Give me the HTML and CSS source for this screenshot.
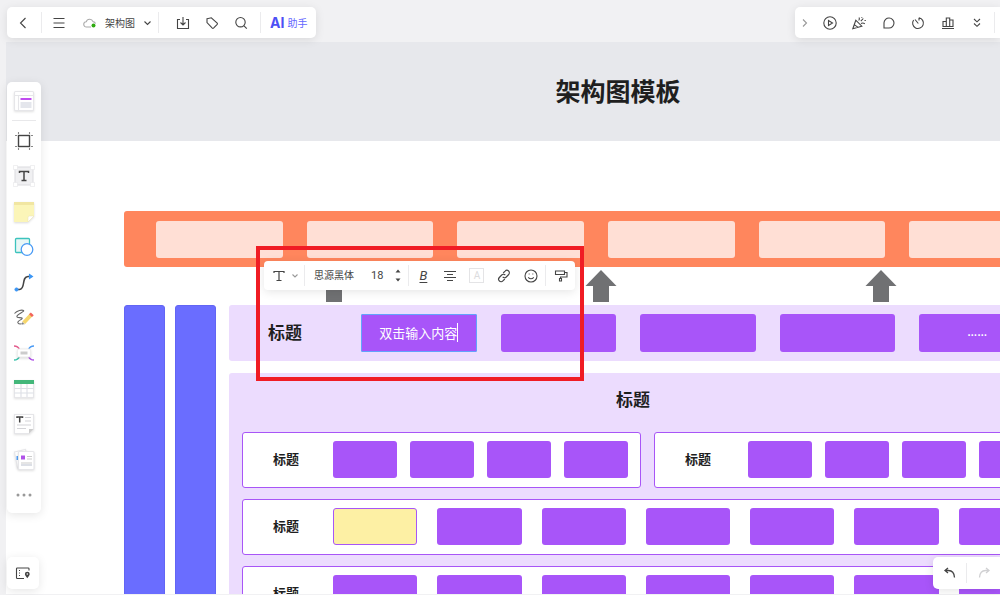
FILE: index.html
```html
<!DOCTYPE html>
<html lang="zh-CN">
<head>
    <meta charset="UTF-8">
    <title>架构图</title>
    <meta name="viewport" content="width=device-width, initial-scale=1.0">
    <link rel="stylesheet" href="styles.css">
</head>
<body>
    <main class="board">
        <div class="artboard">
            <header class="board-title">
                <h1>架构图模板</h1>
            </header>
            <div class="diagram">
                <div class="top-band">
                    <div class="peach"></div>
                    <div class="peach"></div>
                    <div class="peach"></div>
                    <div class="peach"></div>
                    <div class="peach"></div>
                    <div class="peach"></div>
                </div>
                <div class="arrows">
                    <svg width="32" height="32" viewBox="0 0 32 32"><path d="M16 0 31.500 16H24V32H8V16H.5Z"/></svg>
                    <svg width="32" height="32" viewBox="0 0 32 32"><path d="M16 0 31.500 16H24V32H8V16H.5Z"/></svg>
                    <svg width="32" height="32" viewBox="0 0 32 32"><path d="M16 0 31.500 16H24V32H8V16H.5Z"/></svg>
                </div>
                <div class="lower">
                    <div class="pillars">
                        <div class="pillar"></div>
                        <div class="pillar"></div>
                    </div>
                    <div class="groups">
                        <section class="group group-row">
                            <h2>标题</h2>
                            <div class="cells cells-5">
                                <div class="cell selected"><span contenteditable="true">双击输入内容</span><i class="caret"></i></div>
                                <div class="cell"></div>
                                <div class="cell"></div>
                                <div class="cell"></div>
                                <div class="cell more">……</div>
                            </div>
                        </section>
                        <section class="group group-stack">
                            <h2>标题</h2>
                            <div class="card-row">
                                <div class="card">
                                    <h3>标题</h3>
                                    <div class="cells cells-4">
                                        <div class="cell"></div>
                                        <div class="cell"></div>
                                        <div class="cell"></div>
                                        <div class="cell"></div>
                                    </div>
                                </div>
                                <div class="card card-wide">
                                    <h3>标题</h3>
                                    <div class="cells cells-4">
                                        <div class="cell"></div>
                                        <div class="cell"></div>
                                        <div class="cell"></div>
                                        <div class="cell"></div>
                                    </div>
                                </div>
                            </div>
                            <div class="card">
                                <h3>标题</h3>
                                <div class="cells cells-7">
                                    <div class="cell yellow"></div>
                                    <div class="cell"></div>
                                    <div class="cell"></div>
                                    <div class="cell"></div>
                                    <div class="cell"></div>
                                    <div class="cell"></div>
                                    <div class="cell"></div>
                                </div>
                            </div>
                            <div class="card">
                                <h3>标题</h3>
                                <div class="cells cells-7">
                                    <div class="cell"></div>
                                    <div class="cell"></div>
                                    <div class="cell"></div>
                                    <div class="cell"></div>
                                    <div class="cell"></div>
                                    <div class="cell"></div>
                                    <div class="cell"></div>
                                </div>
                            </div>
                        </section>
                    </div>
                </div>
            </div>
        </div>
    </main>

    <!-- barra superior esquerda -->
    <nav class="panel top-left">
        <button class="back" aria-label="返回"><svg width="12" height="14" viewBox="0 0 12 14"><path d="M8.500 2 3.500 7l5 5"/></svg></button>
        <span class="sep"></span>
        <button class="menu" aria-label="菜单"><svg width="14" height="14" viewBox="0 0 14 14"><path d="M1.500 2.500h11M1.500 7h11M1.500 11.500h11"/></svg></button>
        <button class="file">
            <svg class="cloud" width="14" height="12" viewBox="0 0 14 12"><path d="M8 10H3.500a2.600 2.600 0 0 1-.3-5.200A3.600 3.600 0 0 1 10 4.600c1.200.1 2.200.8 2.500 2"/><circle cx="10.500" cy="8.500" r="2"/></svg>
            <span>架构图</span>
            <svg width="9" height="8" viewBox="0 0 9 8"><path d="m1.500 2.500 3 3 3-3"/></svg>
        </button>
        <span class="sep"></span>
        <div class="tools">
            <button aria-label="导入"><svg width="14" height="14" viewBox="0 0 14 14"><path d="M4 3.500H1.500v9h11v-9H10M7 1v8M4.500 6.500 7 9l2.500-2.500"/></svg></button>
            <button aria-label="标签"><svg width="14" height="14" viewBox="0 0 14 14"><path d="M2 2.800 6.300 1.800 12.200 7.200q.5.600 0 1.200L8.500 12.200q-.6.500-1.200 0L2 6.500Z"/></svg></button>
            <button aria-label="搜索"><svg width="14" height="14" viewBox="0 0 14 14"><circle cx="6.500" cy="6.200" r="4.700"/><path d="m10 9.800 2.800 2.800"/></svg></button>
        </div>
        <span class="sep"></span>
        <button class="ai"><b>AI</b><span>助手</span></button>
    </nav>

    <nav class="panel top-right">
        <button class="collapse" aria-label="收起"><svg width="8" height="10" viewBox="0 0 8 10"><path d="m2 1.500 3.500 3.500L2 8.500"/></svg></button>
        <div class="tools">
            <button aria-label="演示"><svg width="14" height="14" viewBox="0 0 14 14"><circle cx="7" cy="7" r="6.200"/><path d="M5.500 4.500v5L9.500 7Z"/></svg></button>
            <button aria-label="庆祝"><svg width="14" height="14" viewBox="0 0 14 14"><path d="M.8 12.800 3.800 4.200l6 6ZM2.300 8.600l3.400 2.500M7 1.500q1 1.500-.3 3M8.800 5.200l2.500-2.700M9 7.500q2-1 3.800.3M9.800 1v.8M12.500 4.500h1.300"/></svg></button>
            <button aria-label="评论"><svg width="14" height="14" viewBox="0 0 14 14"><path d="M2 12V6.800A5 5 0 1 1 7 12Z"/></svg></button>
            <button aria-label="计时"><svg width="14" height="14" viewBox="0 0 14 14"><path d="M8 1.800A5.400 5.400 0 1 1 2.600 4M8 1.800v2.700M4 3.500 7.300 7.500"/></svg></button>
            <button aria-label="投票"><svg width="14" height="14" viewBox="0 0 14 14"><path d="M1 12.500h12M2 10.500V5.500h3.300v5ZM5.300 10.500V2h3.400v8.500ZM8.700 10.500V4H12v6.500Z"/></svg></button>
            <button aria-label="更多"><svg width="10" height="12" viewBox="0 0 10 12"><path d="m2 2 3 2.800L8 2M2 6.500l3 2.800 3-2.800"/></svg></button>
        </div>
        <span class="sep"></span>
    </nav>

    <!-- ferramentas laterais -->
    <aside class="panel side">
        <button class="template" aria-label="模板"><svg width="20" height="20" viewBox="0 0 20 20"><g class="paper"><rect x=".5" y=".5" width="19" height="19" rx="1"/><path d="M.5 4.500h19M4.500 4.500v15"/></g><path d="M6.500 8h11" stroke="#c04cf0" stroke-width="2"/><path d="M6.500 14h11" stroke="#e4e6ec" stroke-width="6"/></svg></button>
        <span class="line"></span>
        <button aria-label="画框"><svg width="20" height="20" viewBox="0 0 20 20"><rect x="4.500" y="4.500" width="11" height="11" stroke-width="1.400"/><path d="M4.500 1v2M15.500 1v2M4.500 17v2M15.500 17v2M1 4.500h2M1 15.500h2M17 4.500h2M17 15.500h2" stroke="#888"/></svg></button>
        <button aria-label="文本"><svg width="22" height="22" viewBox="0 0 22 22"><rect x="2" y="2" width="18" height="18" fill="#f0f0f2" stroke="#dedee2"/><path d="M6.500 8V6.500h9V8M11 6.500v9M8.500 15.500h5" stroke-width="1.500"/><g fill="#fff" stroke="#e6e6e8" stroke-width=".6"><path d="M.5.5h4v4h-4zM17.500.5h4v4h-4zM.5 17.500h4v4h-4zM17.500 17.500h4v4h-4z"/></g></svg></button>
        <button aria-label="便签"><svg width="22" height="22" viewBox="0 0 22 22"><g stroke="none"><path class="shade" d="M1 1h20v14l-6 6H1Z" fill="#fbf5b8"/><path d="M1 1h20v3H1Z" fill="#f1e6a2"/><path d="M21 15h-4.500q-1.500 0-1.500 1.500V21Z" fill="#fff"/></g><path d="M21 15h-4.500q-1.500 0-1.500 1.500V21Z" stroke="#e8e3b4" stroke-width=".5"/></svg></button>
        <button aria-label="图形"><svg width="20" height="20" viewBox="0 0 20 20"><rect x="1.500" y="1.500" width="14" height="14" rx="1" fill="#e9f7f6" stroke="#3cc3bd" stroke-width="1.300"/><circle cx="13" cy="12.500" r="5.800" fill="#fff" stroke="#4a9bf5" stroke-width="1.300"/></svg></button>
        <button aria-label="连线"><svg width="20" height="20" viewBox="0 0 20 20"><path d="M2.500 16.500h3C12 16.500 7 3.500 14 3.500h3" stroke-width="1.500"/><path d="m15.500 1.500 3 2-3 2Z" fill="#3c96f5" stroke="#3c96f5"/><circle cx="2.500" cy="16.500" r="1.700" fill="#3c96f5" stroke="#3c96f5" stroke-width=".6"/></svg></button>
        <button aria-label="画笔"><svg width="22" height="20" viewBox="0 0 22 20"><path d="M1.500 5.500C4 2.500 9 1.500 10.500 2.500S5 5.500 4 8s3.500 1 5 2-5.500 3-4 5 4.500.5 5.500 0" stroke="#666"/><path d="m10.500 15 8-8.500" stroke="#f6d66c" stroke-width="4"/><path d="m17.500 7.700 1.800-1.900" stroke="#f2645c" stroke-width="4"/><path d="m8.300 17 .9-3.200 2.600 2.400Z" fill="#777" stroke="#fff" stroke-width=".5"/></svg></button>
        <button aria-label="思维导图"><svg width="22" height="20" viewBox="0 0 22 20"><g stroke-width="1.400"><path d="M1 3q4 0 5.500 3.500" stroke="#e35b8d"/><path d="M21 3q-4 0-5.500 3.500" stroke="#4a9bf5"/><path d="M1 17q4 0 5.500-3.500" stroke="#3cc3ac"/><path d="M21 17q-4 0-5.500-3.500" stroke="#b052e8"/></g><rect class="shade" x="4.500" y="6" width="13" height="8" rx="1.500" fill="#fff" stroke="#eee"/><path d="M7.500 10h7" stroke="#ccc" stroke-width="3"/></svg></button>
        <button aria-label="表格"><svg width="20" height="20" viewBox="0 0 20 20"><g class="paper"><rect x=".5" y="1.500" width="19" height="17"/><path d="M7 4v14M13 4v14M.5 9.500h19M.5 14h19" stroke="#dcdfe6"/></g><path d="M0 3h20" stroke="#43b77a" stroke-width="4"/></svg></button>
        <button aria-label="文档"><svg width="20" height="20" viewBox="0 0 20 20"><path class="paper" d="M.5.500h19V15l-4.500 4.500H.5Z"/><path d="M3 4V3h5.500v1M5.700 3v5.500" stroke-width="1.500"/><path d="M11 3.500h6M11 7h6M3 11h14M3 14.500h9" stroke="#d4d4d8"/><path d="M19.500 15H15v4.500Z" fill="#ccc" stroke="none"/></svg></button>
        <button aria-label="卡片"><svg width="22" height="22" viewBox="0 0 22 22"><path class="paper" d="m1.500 3 11-2.500 3 15-11 3.500Z"/><path d="M4.500 7v4" stroke="#4a9bf5" stroke-width="2"/><rect class="paper" x="5.500" y="2.500" width="15.500" height="18" rx="1"/><path d="M8 8.500h4" stroke="#b052e8" stroke-width="4"/><path d="M14 7.500h5M14 10h5M8 14h11" stroke="#ccc"/><path d="M8 16h11" stroke="#dcdfe6" stroke-width="2"/></svg></button>
        <button aria-label="更多工具"><svg width="18" height="6" viewBox="0 0 18 6"><g fill="#999" stroke="none"><circle cx="3" cy="3" r="1.500"/><circle cx="9" cy="3" r="1.500"/><circle cx="15" cy="3" r="1.500"/></g></svg></button>
    </aside>

    <div class="panel minimap">
        <button aria-label="导航"><svg width="16" height="14" viewBox="0 0 16 14"><path d="M14 4.500V2.800q0-.8-.8-.8H2.300q-.8 0-.8.800v8.900q0 .8.800.8H9"/><path d="M4 4.500h1M4 7h1M4 9.500h1"/><path d="M12.300 5.700a2.400 2.400 0 0 1 2.400 2.400c0 1.600-1.200 2.500-2.400 4.200-1.200-1.700-2.400-2.600-2.400-4.200a2.400 2.400 0 0 1 2.400-2.400Z" fill="#444" stroke="none"/><circle cx="12.300" cy="8" r=".8" fill="#fff" stroke="none"/></svg></button>
    </div>

    <div class="panel history">
        <button aria-label="撤销"><svg width="14" height="14" viewBox="0 0 14 14"><path d="M5 2 2 4.500 5 7M2 4.500h3.500q5.500 0 6 7" stroke-width="1.300"/></svg></button>
        <span class="sep"></span>
        <button aria-label="重做" disabled><svg width="14" height="14" viewBox="0 0 14 14"><path d="m9 2 3 2.500L9 7M12 4.500H8.500q-5.500 0-6 7" stroke-width="1.300"/></svg></button>
    </div>

    <!-- barra de texto -->
    <div class="panel text-bar">
        <button class="type" aria-label="文本样式">
            <svg width="12" height="12" viewBox="0 0 12 12"><path d="M1 3V1.500h10V3M6 1.500v9M3.500 10.500h5" stroke-width="1.200"/></svg>
            <svg class="soft" width="8" height="6" viewBox="0 0 8 6"><path d="m1.500 1.500 2.500 2.500 2.500-2.500"/></svg>
        </button>
        <span class="sep"></span>
        <select class="font" aria-label="字体"><option>思源黑体</option></select>
        <input class="size" type="text" value="18" aria-label="字号">
        <div class="stepper">
            <button aria-label="增大"><svg width="6" height="4" viewBox="0 0 6 4"><path d="M.5 3.500 3 .5l2.500 3Z"/></svg></button>
            <button aria-label="减小"><svg width="6" height="4" viewBox="0 0 6 4"><path d="M.5.500 3 3.500 5.500.500Z"/></svg></button>
        </div>
        <span class="sep"></span>
        <div class="tools">
            <button class="bold" aria-label="加粗">B</button>
            <button aria-label="对齐"><svg width="12" height="12" viewBox="0 0 12 12"><path d="M0 1.500h12M3 4.500h6M0 7.500h12M3 10.500h6"/></svg></button>
            <button class="color" aria-label="文字颜色"><span>A</span></button>
            <button aria-label="链接"><svg width="14" height="14" viewBox="0 0 14 14"><path d="m6.200 4 1.900-1.900a2.400 2.400 0 0 1 3.600 3.400L9.300 8a2.400 2.400 0 0 1-3.600-.2M7.800 10l-1.900 1.900a2.400 2.400 0 0 1-3.600-3.400L4.700 6a2.400 2.400 0 0 1 3.600.2"/></svg></button>
            <button aria-label="表情"><svg width="14" height="14" viewBox="0 0 14 14"><circle cx="7" cy="7" r="6"/><path d="M4.200 8.300q2.800 3 5.600 0M4.700 5h.9M8.400 5h.9"/></svg></button>
        </div>
        <span class="sep"></span>
        <button class="painter" aria-label="格式刷"><svg width="14" height="14" viewBox="0 0 14 14"><path d="M1.500 2h9v3.500h-9ZM10.500 3.500H13V8H6.500v1.500M5.500 9.500h2V12h-2Z"/></svg></button>
    </div>

    <div class="highlight"></div>
</body>
</html>
```
FILE: styles.css
```css
* {
    box-sizing: border-box;
}
body {
    margin: 0;
    height: 100vh;
    padding: 42px 0 1px 6px;
    overflow: hidden;
    background-color: #f1f1f3;
    color: #1f1f1f;
    font-family: Roboto, "Noto Sans CJK SC", sans-serif;
    font-size: 10px;
}
h1, h2, h3 {
    margin: 0;
    font-weight: 700;
}
button, select, input {
    margin: 0;
    padding: 0;
    border: none;
    background: none;
    color: #444;
    font-family: inherit;
    font-size: 10px;
}
button {
    display: flex;
    align-items: center;
    justify-content: center;
    cursor: pointer;
}
button svg {
    display: block;
    flex: none;
    fill: none;
    stroke: #444;
    stroke-width: 1.1;
    overflow: visible;
}

/* quadro */
.board {
    height: 100%;
    overflow: hidden;
    background-color: white;
}
.artboard {
    width: 1224px;
}
.board-title {
    display: flex;
    align-items: center;
    justify-content: center;
    height: 99px;
    padding-top: 2px;
    background-color: #e7e8ec;
}
.board-title h1 {
    font-size: 25px;
    line-height: 36px;
}
.diagram {
    padding: 70px 118px 0;
}
.top-band {
    display: grid;
    grid-template-columns: repeat(6, 1fr);
    gap: 24px;
    padding: 10px 76px 9px 32px;
    background-color: #ff865d;
    border-radius: 3px;
}
.peach {
    height: 37px;
    background-color: #ffdfd5;
    border-radius: 3px;
}
.arrows {
    display: grid;
    grid-template-columns: 267px 280px 32px;
    padding: 3px 0 3px 194px;
}
.arrows svg {
    display: block;
    fill: #707173;
}
.lower {
    display: flex;
    gap: 13px;
}
.pillars {
    display: flex;
    gap: 10px;
}
.pillar {
    width: 41px;
    background-color: #6a6dff;
    border: 1px solid #6265f4;
    border-radius: 3px;
}
.groups {
    display: flex;
    flex-direction: column;
    gap: 12px;
    width: 840px;
}
.group {
    background-color: #ecdcfe;
    border-radius: 3px;
}
.group h2 {
    font-size: 17px;
    line-height: 24px;
}
.group-row {
    display: flex;
    align-items: center;
    height: 56px;
    padding: 0 34px 0 39px;
}
.group-row h2 {
    width: 93px;
}
.group-stack {
    display: flex;
    flex-direction: column;
    gap: 11px;
    padding: 15px 13px;
}
.group-stack h2 {
    padding: 0 32px 9px 0;
    text-align: center;
}
.card-row {
    display: flex;
    gap: 13px;
}
.card {
    display: flex;
    align-items: center;
    flex: 1;
    padding: 8px 12px 9px 30px;
    background-color: white;
    border: 1px solid #a855f7;
    border-radius: 3px;
}
.card h3 {
    width: 60px;
    font-size: 13px;
    line-height: 18px;
}
.card-wide h3 {
    width: 63px;
}
.card-row .card {
    flex: none;
}
.cells {
    display: grid;
    flex: 1;
}
.cells-4 {
    grid-template-columns: repeat(4, 64px);
    gap: 13px;
}
.cells-5 {
    grid-template-columns: repeat(5, 1fr);
    gap: 24px;
}
.cells-7 {
    grid-template-columns: repeat(7, 1fr);
    gap: 20px;
}
.cell {
    display: flex;
    align-items: center;
    justify-content: center;
    height: 37px;
    background-color: #a855f9;
    border-radius: 3px;
    color: white;
    font-size: 13px;
}
.cells-5 .cell {
    height: 38px;
    padding-bottom: 2px;
}
.cell.more {
    font-family: "Liberation Sans", sans-serif;
    font-size: 10px;
    font-weight: bold;
}
.cell.yellow {
    background-color: #fdf0a4;
    border: 1px solid #a855f7;
}
.cell.selected {
    border: 1px solid #62a3fb;
    border-radius: 1px;
}
.caret {
    width: 1px;
    height: 19px;
    background-color: white;
}

/* painéis flutuantes */
.panel {
    position: absolute;
    display: flex;
    align-items: stretch;
    background-color: white;
    border-radius: 5px;
    box-shadow: 0 2px 10px rgba(0, 0, 0, 0.1);
}
.sep {
    width: 1px;
    margin: 5px 2px;
    background-color: #ebebed;
}
.tools {
    display: flex;
}
.top-left {
    top: 7px;
    left: 7px;
    height: 31px;
}
.back {
    width: 32px;
}
.menu {
    width: 30px;
}
.file {
    gap: 8px;
    padding: 0 4px 0 9px;
}
.cloud {
    stroke: #aaa;
}
.cloud circle {
    fill: #2faa10;
    stroke: none;
}
.top-left .tools {
    padding: 0 3px 0 7px;
}
.top-left .tools button {
    width: 29px;
}
.ai {
    gap: 3px;
    padding: 0 9px 0 7px;
    color: #6366ff;
}
.ai b {
    color: #4d50f5;
    font-family: Inter, sans-serif;
    font-size: 14px;
}
.top-right {
    top: 7px;
    right: 0;
    width: 205px;
    height: 31px;
    padding-right: 3px;
    border-radius: 5px 0 0 5px;
}
.collapse {
    width: 20px;
}
.collapse svg, .soft {
    stroke: #999;
}
.top-right .tools, .text-bar .tools {
    flex: 1;
}
.top-right .tools button, .text-bar .tools button {
    flex: 1;
}
.side {
    top: 82px;
    bottom: 82px;
    left: 7px;
    width: 34px;
    flex-direction: column;
}
.side button {
    flex: 1;
}
.side .template {
    flex: none;
    height: 38px;
}
.line {
    height: 1px;
    margin: 0 5px 2px;
    background-color: #e8e8ea;
}
.paper {
    fill: white;
    stroke: #e6e6e9;
    filter: drop-shadow(0 1px 1px rgba(0, 0, 0, 0.12));
}
.shade {
    filter: drop-shadow(0 1px 1px rgba(0, 0, 0, 0.15));
}
.minimap {
    bottom: 6px;
    left: 7px;
    height: 32px;
}
.minimap button {
    width: 32px;
}
.history {
    right: 0;
    bottom: 6px;
    height: 32px;
    border-radius: 5px 0 0 5px;
}
.history button {
    width: 33px;
}
.history .sep {
    margin: 6px 0;
}
.history button:disabled svg {
    stroke: #d0d0d2;
}
.text-bar {
    top: 261px;
    left: 264px;
    width: 311px;
    height: 29px;
    border-radius: 4px;
}
.text-bar .sep {
    margin: 4px 0;
}
.type {
    gap: 6px;
    padding: 0 5px 0 9px;
}
.font {
    appearance: none;
    width: 66px;
    padding-left: 9px;
}
.size {
    width: 20px;
    font-family: Roboto, sans-serif;
    font-size: 11px;
}
.stepper {
    display: flex;
    flex-direction: column;
    justify-content: center;
    gap: 5px;
    width: 17px;
    padding-right: 3px;
}
.stepper svg {
    fill: #444;
    stroke: none;
}
.text-bar .tools {
    padding: 0 1px;
}
.text-bar .bold {
    font-size: 13px;
    font-style: italic;
    text-decoration: underline;
    text-underline-offset: 2px;
}
.color span {
    width: 15px;
    border: 1px solid #e4e4e6;
    color: #dcdcde;
    line-height: 13px;
}
.painter {
    width: 29px;
}
.highlight {
    position: absolute;
    top: 246px;
    left: 256px;
    width: 328px;
    height: 135px;
    border: 4px solid #f01c24;
    pointer-events: none;
}
```
